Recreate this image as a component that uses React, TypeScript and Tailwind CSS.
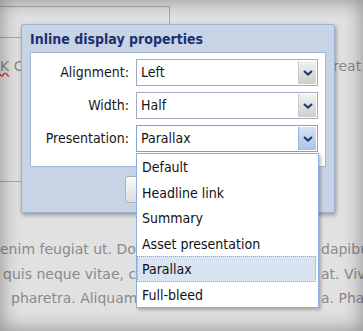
import React from 'react';

const options = ['Default', 'Headline link', 'Summary', 'Asset presentation', 'Parallax', 'Full-bleed'];

const rows = [
  { label: 'Alignment:', value: 'Left', focused: false },
  { label: 'Width:', value: 'Half', focused: false },
  { label: 'Presentation:', value: 'Parallax', focused: true },
];

const lorem = [
  { left: 'enim feugiat ut. Donec', right: 'dapibus', pad: 'pl-0' },
  { left: 'quis neque vitae, cras', right: 'at. Vivamus', pad: 'pl-[3px]' },
  { left: 'pharetra. Aliquam erat', right: 'a. Phasellus', pad: 'pl-[11px]' },
];

function Chevron() {
  return (
    <svg width="10" height="6" viewBox="0 0 10 6">
      <path d="M1 1l4 3.5L9 1" fill="none" stroke="#1c3877" strokeWidth="2.2" />
    </svg>
  );
}

function Select({ value, focused }: { value: string; focused: boolean }) {
  return (
    <div
      className={`flex h-[27px] w-[182px] border bg-white ${focused ? 'border-[#7ba3d6]' : 'border-[#a4abbf]'}`}
    >
      <div className="flex-1 pl-[4px] leading-[25px]">{value}</div>
      <div
        className={`my-[1px] mr-[1px] flex w-[18px] items-center justify-center border-l ${
          focused
            ? 'border-[#9ab8de] bg-gradient-to-b from-[#d6e3f3] to-[#a9c3e4]'
            : 'border-[#c9c9c9] bg-gradient-to-b from-[#f2f2f2] to-[#cdcdcd]'
        }`}
      >
        <Chevron />
      </div>
    </div>
  );
}

export default function App() {
  return (
    <div className="relative h-[331px] w-[363px] overflow-hidden bg-[#e1e1e1] font-['DejaVu_Sans',sans-serif] text-[14px] text-[#8a8a8a]">
      {/* page behind the dialog */}
      <div className="pt-[6px]">
        <div className="ml-[-1px] h-[32px] w-[171px] border border-[#a9a9a9]" />
        <div className="mt-[19px] flex whitespace-nowrap leading-[18px]">
          <span className="w-[333px] shrink-0">
            <span className="underline decoration-[#d33] decoration-wavy">K</span> Cl
          </span>
          <span className="shrink-0">reat</span>
        </div>
        <div className="mt-[106px] w-[21px] border-t border-[#a9a9a9]" />
        <div className="mt-[55px] flex flex-col leading-[24.5px]">
          {lorem.map((l) => (
            <div key={l.left} className="flex whitespace-nowrap">
              <span className={`w-[136px] shrink-0 overflow-hidden ${l.pad}`}>{l.left}</span>
              <span className="w-[185px] shrink-0" />
              <span className="shrink-0">{l.right}</span>
            </div>
          ))}
        </div>
      </div>

      {/* dialog */}
      <div className="absolute left-[21px] top-[24px] h-[189px] w-[314px] rounded-[2px] border border-[#9db2d0] bg-[#c6d4e6] px-[8px] font-['DejaVu_Sans_Condensed','DejaVu_Sans',sans-serif] text-[#161616] shadow-[1px_2px_4px_rgba(0,0,0,0.35)] font-stretch-condensed">
        <div className="h-[27px] text-[14px] leading-[28px] font-bold text-[#1e2f70]">Inline display properties</div>
        <div className="flex h-[115px] w-[296px] flex-col gap-[6px] border border-[#a3b8d8] bg-white pt-[6px]">
          {rows.map((r) => (
            <div key={r.label} className="flex items-center gap-[7px]">
              <div className="w-[98px] text-right">{r.label}</div>
              <Select value={r.value} focused={r.focused} />
            </div>
          ))}
        </div>
        <div className="ml-[95px] mt-[9px] h-[27px] w-[70px] rounded-[3px] border border-[#b2b2b2] bg-gradient-to-b from-[#fbfbfb] to-[#dedede]" />
      </div>

      {/* open dropdown list */}
      <div className="absolute left-[136px] top-[153px] w-[183px] border border-[#8aaee0] bg-white font-['DejaVu_Sans_Condensed','DejaVu_Sans',sans-serif] text-[#111] shadow-[2px_2px_3px_rgba(0,0,0,0.25)] font-stretch-condensed">
        {options.map((o) => (
          <div
            key={o}
            className={`mr-[2px] h-[25.5px] pl-[4px] leading-[24px] ${
              o === 'Parallax' ? 'border border-dotted border-[#86a6d8] bg-[#d9e4f3] pl-[3px]' : 'border border-transparent'
            }`}
          >
            {o}
          </div>
        ))}
      </div>

      {/* vignette */}
      <div className="pointer-events-none absolute inset-0 shadow-[inset_0_0_20px_rgba(0,0,0,0.4)]" />
    </div>
  );
}
